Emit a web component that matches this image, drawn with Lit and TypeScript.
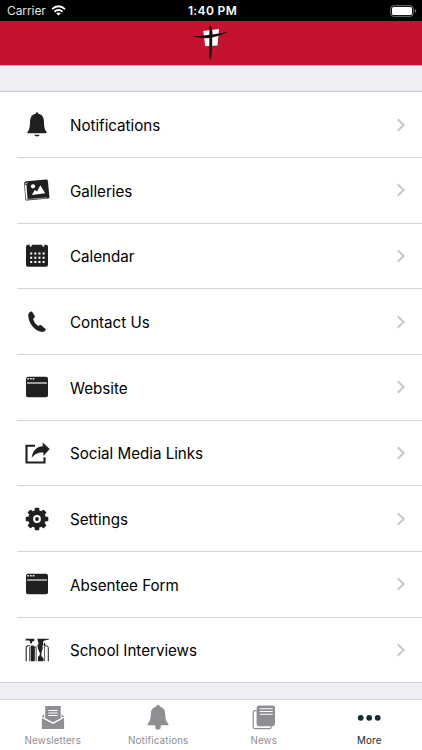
import { LitElement, html, svg, css } from "lit";
import { customElement, property } from "lit/decorators.js";

const browser = svg`
  <rect x="1" y="1.7" width="22" height="20.6" rx="2" fill="#202022"/>
  <path d="M2.3 3.7h1.6M5 3.7h1.6M7.7 3.7h1.6" stroke="#fff" stroke-width="1.6"/>
  <path d="M2 8h20" stroke="#d4d4d4" stroke-width="1.4"/>`;

const bell = svg`
  <path d="M12-.7c.9 0 1.2.6 1.2 1.4 3.7.7 5.6 3.3 5.7 6.9.1 4.400.3 8.200 1.800 10.200l.9 1.500v.9H2.400v-.9l.9-1.500c1.500-2 1.700-5.800 1.800-10.200.1-3.600 2-6.200 5.700-6.900 0-.8.3-1.400 1.200-1.400z"/>
  <path d="M9.300 21.700h5.400c-.4 1.100-1.300 1.700-2.700 1.700s-2.300-.6-2.700-1.700z"/>`;

const icons: Record<string, unknown> = {
  bell,
  browser,
  bellTab: svg`
    <path d="M12-.2c1.200 0 1.700.8 1.700 1.700 3.500.9 5.400 3.600 5.500 7 .1 4.300.4 6.800 2 8.800l1.300 1.900v1H1.500v-1l1.300-1.900c1.600-2 1.900-4.500 2-8.800.1-3.400 2-6.100 5.500-7 0-.9.500-1.700 1.700-1.700z"/>
    <path d="M9.300 20h5.400v2.200q0 2.300-2.700 2.300t-2.700-2.300z"/>`,
  gallery: svg`
    <path d="M1.500 3.300L21 1.600q1.600-.1 1.900 1.300l1.500 16q.1 1.300-1.200 1.500L2 22.600Q.5 22.700.3 21L-.8 6.200Q-1 3.700 1.500 3.300z"/>
    <path d="M.6 6.600L1.700 20.400q.1.900.9.900" stroke="#fff" stroke-width="1.600" fill="none"/>
    <path d="M.2 5.600L2.600 4.800" stroke="#fff" stroke-width=".8"/>
    <path d="M3.400 21.300l18.500-1.500" stroke="#ccc" stroke-width=".7"/>
    <circle cx="8" cy="8.300" r="2.100" fill="#fff"/>
    <path d="M6.900 16.900l2.900-4.900 2.300 1.400 3.200-6.200 4.900 8.100z" fill="#fff"/>`,
  calendar: svg`
    <path d="M3 .8h1.700v1q0 1 1 1t1-1v-1h10.600v1q0 1 1 1t1-1v-1H21q2 0 2 2v17.900q0 2-2 2H3q-2 0-2-2V2.800q0-2 2-2z"/>
    <path d="M5.200 9.600h14.400M5.200 13.800h14.400M5.200 18h14.400" stroke="#fff" stroke-width="2" stroke-dasharray="2 2.130"/>`,
  phone: svg`
    <path d="M3.400 3.700Q4.800 1.300 7 1.500L9.900 6.300Q9.800 8 8.100 8.900q.9 4.100 5 7.200 1.500-1.400 2.900-1.100l5 4.400q-.9 2.400-3.400 2.500C11.200 22 2.400 13.300 3.400 3.700z"/>`,
  share: svg`
    <path d="M10 4.800H1.500v16.700h18v-5.200" fill="none" stroke="#202022" stroke-width="2.100"/>
    <path d="M17.700 1.500l7 6.400-6.300 7.200v-3.600c-5.200-.2-8.500 1-11.700 5.500C7.500 10 11.300 5.600 17.700 5.200z"/>`,
  gear: svg`
    <circle cx="12" cy="12" r="6.400" fill="none" stroke="#202022" stroke-width="5"/>
    <circle cx="12" cy="12" r="1.900"/>
    ${[0, 45, 90, 135, 180, 225, 270, 315].map(
      (a) => svg`<path d="M9.700 4.500V1.500q0-.8.8-.8h3q.8 0 .8.800v3z" transform="rotate(${a} 12 12)"/>`
    )}`,
  people: svg`
    <path d="M.7.700h8.600v2.300H8Q6.900 3.600 6.700 5.600L5.200 5.500Q5.500 3 3.900 2.400 2.300 2 .7 3z"/>
    <path d="M1.200 23.300V9.800Q1.200 8 3 7.800h2" fill="none" stroke="#202022" stroke-width="1.100"/>
    <path d="M4 9h.7v14.300H4zM5.600 23.300V9l.4-1.500h2q1.800.2 1.800 2v13.800z"/>
    <path d="M9.600 8.400h1.900v14.900h-.8V9.400H9.600z"/>
    <path d="M12.300.700h6.600v2.200l-.9 1 .1 3.100-.9 1.500.7 1-1.200 4.600-.4 1.800.2 2.300 2 2v3.100H13v-4.200l1.800-2v-2.200l-1.900-4.500-.5-3.400 1.300-1z"/>
    <path d="M18.600.7h5v1.200q-2-.6-3.400.7h-1.600z"/>
    <path d="M18.800 8.500h1.100v14.800h-.7V9.400h-.4z"/>
    <path d="M19.600 7.900h2q1.700.2 1.700 1.900v13.500" fill="none" stroke="#202022" stroke-width="1"/>
    <path d="M18.900 4.500l1.700 1.300-.9 2.200h-1z"/>`,
  letter: svg`
    <path d="M4.200 1h15.500v12.500L12 17.500l-7.800-4.200z"/>
    <path d="M7.300 5.500h9.400M7.300 8h9.400M7.300 10.500h9.400" stroke="#fff" stroke-width="1.100"/>
    <path d="M3.200 9.200L.8 11.500 3.200 13zM20.700 9.200l2.400 2.300-2.400 1.500z"/>
    <path d="M0 12.100L12 18.400l12-6.300" fill="none" stroke="#fff" stroke-width="1.300"/>
    <path d="M.9 13L12 18.900 23.100 13v10.900H.9z"/>`,
  news: svg`
    <path d="M4.500 5.700H3q-1.800 0-1.800 1.800v14.300q0 1.800 1.800 1.800h14.600q1.800 0 1.800-1.800v-.5" fill="none" stroke="#8e8e93" stroke-width="1.200"/>
    <rect x="4.600" y=".4" width="18.400" height="20.800" rx="2.400"/>
    <path d="M7.700 3.700h13M7.700 6.500h13M7.700 9.300h13" stroke="#fff" stroke-width="1.100"/>`,
  dots: svg`
    <circle cx="3.700" cy="12.800" r="2.900"/><circle cx="12.200" cy="12.800" r="2.900"/><circle cx="20.700" cy="12.800" r="2.900"/>`,
};

@customElement("app-icon")
class AppIcon extends LitElement {
  @property() name = "";
  static styles = css`
    :host { display: block; width: 24px; height: 24px; flex: none; }
    svg { display: block; overflow: visible; fill: currentColor; }
  `;
  render() {
    return html`<svg width="24" height="24" viewBox="0 0 24 24">${icons[this.name]}</svg>`;
  }
}

const rows = [
  { icon: "bell", label: "Notifications" },
  { icon: "gallery", label: "Galleries" },
  { icon: "calendar", label: "Calendar" },
  { icon: "phone", label: "Contact Us" },
  { icon: "browser", label: "Website" },
  { icon: "share", label: "Social Media Links" },
  { icon: "gear", label: "Settings" },
  { icon: "browser", label: "Absentee Form" },
  { icon: "people", label: "School Interviews" },
];

const tabs = [
  { icon: "letter", label: "Newsletters" },
  { icon: "bellTab", label: "Notifications" },
  { icon: "news", label: "News" },
  { icon: "dots", label: "More", active: true },
];

@customElement("app-root")
class AppRoot extends LitElement {
  static styles = css`
    :host {
      display: flex; flex-direction: column; width: 422px; height: 750px;
      overflow: hidden; background: #efeef4; color: #000;
      font-family: Inter, "Liberation Sans", sans-serif;
    }
    .status {
      display: grid; grid-template-columns: 1fr auto 1fr; align-items: center;
      height: 21px; flex: none; box-sizing: border-box; padding: 0 5px 0 7px;
      background: #000; color: #fff; font-size: 12px;
    }
    .carrier { display: flex; align-items: center; gap: 5px; color: #e4e4e4; letter-spacing: -0.08px; }
    .time { font-weight: 600; font-size: 12px; letter-spacing: 0.36px; padding-left: 1px; }
    .battery { justify-self: end; }
    svg { display: block; }
    .nav {
      height: 45px; flex: none; box-sizing: border-box; background: #c41230;
      border-bottom: 1px solid #eda6b4; display: flex; justify-content: center;
    }
    .list {
      margin-top: 25px; height: 592px; flex: none; box-sizing: border-box;
      border-top: 1px solid #c9c8cd; border-bottom: 1px solid #d2d1d6;
      background: #fff; display: grid; grid-template-rows: 65.100px repeat(7, 65.667px) 1fr;
    }
    .row { display: flex; align-items: stretch; margin-left: 17px; }
    .row app-icon { align-self: center; margin: 0 21px 0 8px; color: #202022; }
    .cell { flex: 1; display: flex; align-items: center; justify-content: space-between; padding-right: 16px; }
    .row + .row { border-top: 1px solid #d3d3d5; }
    .label { font-size: 15.200px; letter-spacing: -0.030px; padding-top: 1.600px; }
    .tabs {
      margin-top: auto; height: 51px; flex: none; box-sizing: border-box;
      border-top: 1px solid #d9d8dd; background: #fff;
      display: grid; grid-template-columns: repeat(4, 1fr);
    }
    .tab { display: flex; flex-direction: column; align-items: center; padding-top: 5px; color: #8e8e93; }
    .tab span { font-size: 9.800px; line-height: 12px; margin-top: 6px; letter-spacing: 0.15px; }
    .active { color: #10302f; }
  `;

  render() {
    return html`
      <div class="status">
        <div class="carrier">
          <span>Carrier</span>
          <svg width="15" height="11" viewBox="0 0 15 11" fill="none" stroke="#fff" stroke-width="1.900">
            <path d="M1 4.100Q7.500-1.700 14 4.100M3.400 6.700q4.100-3.500 8.200 0"/>
            <path d="M7.500 10.500L5.200 8.300q2.300-1.700 4.600 0z" fill="#fff" stroke="none"/>
          </svg>
        </div>
        <div class="time">1:40 PM</div>
        <svg class="battery" width="27" height="12" viewBox="0 0 27 12">
          <rect x=".7" y=".7" width="22.600" height="10.600" rx="2.800" fill="none" stroke="#777"/>
          <rect x="2" y="2" width="20" height="8" rx="1.500" fill="#fff"/>
          <path d="M24.800 4v4q1.500-.6 1.500-2t-1.500-2z" fill="#777"/>
        </svg>
      </div>
      <div class="nav">
        <svg width="36" height="44" viewBox="0 0 36 44">
          <path d="M10.300 9.900l15.700-2-1.500 16.500-12.300.9z" fill="#fff"/>
          <path d="M16.700 3.600q2.600 3 2.800 7.900l-.1 1.900q8-.9 16-2.900-7.600 4.600-16.200 6l-.1 10.300q-.3 8-2 13.300-1-5-.8-12.800l.1-10.200Q7.500 17.600.500 15.600v-.6q8.100.1 15.900-1.200v-2.700z" fill="#180b10"/>
        </svg>
      </div>
      <div class="list">
        ${rows.map((r) => html`
          <div class="row">
            <app-icon name=${r.icon}></app-icon>
            <div class="cell">
              <span class="label">${r.label}</span>
              <svg width="10" height="14" viewBox="0 0 10 14" fill="none" stroke="#c7c7cc" stroke-width="2">
                <path d="M1.700 1.200L7.700 7l-6 5.800"/>
              </svg>
            </div>
          </div>`)}
      </div>
      <div class="tabs">
        ${tabs.map((t) => html`
          <div class="tab ${t.active ? "active" : ""}">
            <app-icon name=${t.icon}></app-icon>
            <span>${t.label}</span>
          </div>`)}
      </div>`;
  }
}
